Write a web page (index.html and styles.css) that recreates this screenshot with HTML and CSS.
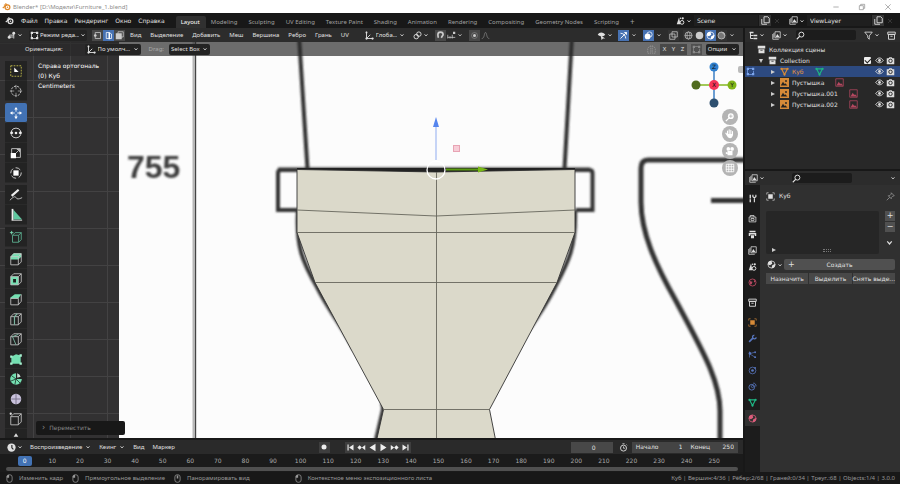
FILE: index.html
```html
<!DOCTYPE html>
<html lang="ru">
<head>
  <meta charset="UTF-8">
  <title>Blender</title>
  <link rel="stylesheet" href="styles.css">
</head>
<body>
  <!-- icon sprite, every symbol is 12x12 -->
  <svg class="sprite" aria-hidden="true">
    <symbol id="i-down" viewBox="0 0 12 12"><path d="M3 4.500 6 8l3-3.500" fill="none" stroke="currentColor" stroke-width="1.600"/></symbol>
    <symbol id="i-blender" viewBox="0 0 12 12"><path d="M1 8 6 4H2.500M6 4 4.800 1.800" fill="none" stroke="currentColor" stroke-width="1.500"/><circle cx="7.300" cy="7" r="3.200" fill="none" stroke="currentColor" stroke-width="1.700"/><circle cx="7.300" cy="7" r="1.100" fill="currentColor"/></symbol>
    <symbol id="i-view" viewBox="0 0 12 12"><path d="M1 8h7M3 8V5.500h6M9 2v8" fill="none" stroke="currentColor" stroke-width="1.200"/><circle cx="9" cy="3" r="1.900" fill="currentColor"/><circle cx="3" cy="8.500" r="1.900" fill="currentColor"/></symbol>
    <symbol id="i-edit" viewBox="0 0 12 12"><path d="M2 4v5M4 2h4M10 5v3M4 10h4" stroke="currentColor" fill="none"/><path d="M1 1h3v3H1zM8 1h3v3H8zM1 8h3v3H1zM8 8h3v3H8z" fill="currentColor"/></symbol>
    <symbol id="i-vert" viewBox="0 0 12 12"><path d="M3 2h7v8H3z" fill="none" stroke="currentColor"/><circle cx="3" cy="6" r="1.800" fill="currentColor"/></symbol>
    <symbol id="i-edge" viewBox="0 0 12 12"><path d="M3 2h4l3 2v6H3z" fill="none" stroke="currentColor"/><path d="M7 2v9" stroke="currentColor" stroke-width="2"/></symbol>
    <symbol id="i-face" viewBox="0 0 12 12"><path d="M4 1h7v7H4z" fill="none" stroke="currentColor"/><path d="M1 3h8v8H1z" fill="currentColor"/></symbol>
    <symbol id="i-axes" viewBox="0 0 12 12"><path d="M2 1v9h9M2 10l5-5" fill="none" stroke="currentColor" stroke-width="1.200"/><circle cx="2" cy="2" r="1.300" fill="currentColor"/><circle cx="10" cy="10" r="1.500" fill="currentColor"/><circle cx="2" cy="10" r="1.500" fill="currentColor"/></symbol>
    <symbol id="i-pivot" viewBox="0 0 12 12"><circle cx="4.300" cy="7.500" r="3" fill="none" stroke="currentColor" stroke-width="1.200"/><circle cx="7.800" cy="4.200" r="3" fill="none" stroke="currentColor" stroke-width="1.200"/><circle cx="6" cy="6" r="1" fill="currentColor"/></symbol>
    <symbol id="i-magnet" viewBox="0 0 12 12"><path d="M3 9 2.500 5a3.500 3.500 0 0 1 7 0L7 9" fill="none" stroke="currentColor" stroke-width="2.200"/></symbol>
    <symbol id="i-snap" viewBox="0 0 12 12"><path d="M1 5v5M4 7v3M7 5v5M1 8.500h10" fill="none" stroke="currentColor"/><path d="M8 1h3v3H8z" fill="currentColor"/></symbol>
    <symbol id="i-prop" viewBox="0 0 12 12"><circle cx="6" cy="6" r="4" fill="none" stroke="currentColor" opacity=".4"/><circle cx="6" cy="6" r="2" fill="currentColor"/></symbol>
    <symbol id="i-bell" viewBox="0 0 12 12"><path d="M1 10c4 0 3-8 5-8s1 8 5 8" fill="none" stroke="currentColor" stroke-width="1.200"/></symbol>
    <symbol id="i-eyecur" viewBox="0 0 12 12"><path d="M1 5c2-4 7-4 10 0-3 3-6 3-10 0z" fill="currentColor"/><path d="m5 6 1 6 2-2 3 0z" fill="currentColor"/></symbol>
    <symbol id="i-gizmo" viewBox="0 0 12 12"><path d="M2 3c4 0 7 3 7 7M2 10l8-8M7 2h3v3" fill="none" stroke="currentColor" stroke-width="1.200"/></symbol>
    <symbol id="i-overlay" viewBox="0 0 12 12"><circle cx="4.800" cy="7.200" r="3.800" fill="currentColor"/><circle cx="7.300" cy="4.700" r="3.500" fill="none" stroke="currentColor"/></symbol>
    <symbol id="i-xray" viewBox="0 0 12 12"><path d="M4 1h7v7H4zM1 4h7v7H1z" fill="none" stroke="currentColor"/></symbol>
    <symbol id="i-mirror" viewBox="0 0 12 12"><path d="M5 1v10H1V4zM7 1v10h4V4z" fill="none" stroke="currentColor" stroke-dasharray="2 1"/></symbol>
    <symbol id="i-wire" viewBox="0 0 12 12"><circle cx="6" cy="6" r="4.700" fill="none" stroke="currentColor"/><ellipse cx="6" cy="6" rx="2" ry="4.700" fill="none" stroke="currentColor" stroke-width=".8"/><path d="M1 6h10" stroke="currentColor" stroke-width=".8"/></symbol>
    <symbol id="i-solid" viewBox="0 0 12 12"><circle cx="6" cy="6" r="5" fill="currentColor"/></symbol>
    <symbol id="i-ball" viewBox="0 0 12 12"><circle cx="6" cy="6" r="4.700" fill="none" stroke="currentColor"/><path d="M6 1a5 5 0 0 0-5 5l3 1 3-2zM6 11l1-4 4-2a5 5 0 0 1-5 6z" fill="currentColor"/></symbol>
    <symbol id="i-render" viewBox="0 0 12 12"><circle cx="6" cy="6" r="4.700" fill="#777" stroke="currentColor"/><path d="M6 2a4 4 0 0 1 4 4" fill="none" stroke="currentColor"/></symbol>
    <symbol id="i-scene" viewBox="0 0 12 12"><path d="M4 2 1 11h5z" fill="currentColor"/><circle cx="8" cy="8.500" r="2.500" fill="none" stroke="currentColor" stroke-width="1.300"/><circle cx="9" cy="3" r="1.500" fill="currentColor"/><circle cx="6" cy="3" r="1" fill="currentColor"/></symbol>
    <symbol id="i-copy" viewBox="0 0 12 12"><path d="M4 1h5l2 2v6H4zM1 4v7h7" fill="none" stroke="currentColor" stroke-width="1.200"/></symbol>
    <symbol id="i-layers" viewBox="0 0 12 12"><path d="M1 4v7h8M2.500 2.500V9" fill="none" stroke="currentColor"/><path d="M4 1h7v8H4z" fill="none" stroke="currentColor"/><path d="m5 8 2-4 3 4z" fill="currentColor"/></symbol>
    <symbol id="i-x" viewBox="0 0 12 12"><path d="m2 2 8 8M10 2l-8 8" stroke="currentColor" fill="none"/></symbol>
    <symbol id="i-tree" viewBox="0 0 12 12"><path d="M1 2h4M2 2v8h4M2 6h4" fill="none" stroke="currentColor" stroke-width="1.300"/><path d="M6 5h5v2H6zM6 9h5v2H6zM1 1h5v2H1z" fill="currentColor"/></symbol>
    <symbol id="i-search" viewBox="0 0 12 12"><circle cx="7.200" cy="4.800" r="3.300" fill="none" stroke="currentColor" stroke-width="1.300"/><path d="M5 7 1 11" stroke="currentColor" stroke-width="1.500"/></symbol>
    <symbol id="i-filter" viewBox="0 0 12 12"><path d="M1 1.500h10L7 6.500V11L5 9V6.500z" fill="none" stroke="currentColor" stroke-width="1.100"/></symbol>
    <symbol id="i-box" viewBox="0 0 12 12"><path d="M1 1h10v3.500H1zM2 5.500h8V11H2z" fill="currentColor"/><path d="M4.500 7h3" stroke="#282828"/></symbol>
    <symbol id="i-boxo" viewBox="0 0 12 12"><path d="M1 1.500h10v3H1zM2 4.500h8V11H2zM4.500 7h3" fill="none" stroke="currentColor" stroke-width="1.200"/></symbol>
    <symbol id="i-mesh" viewBox="0 0 12 12"><path d="M2 2.500h8L6 10z" fill="none" stroke="currentColor" stroke-width="1.500"/><circle cx="2" cy="2.500" r="1.500" fill="currentColor"/><circle cx="10" cy="2.500" r="1.500" fill="currentColor"/><circle cx="6" cy="10" r="1.500" fill="currentColor"/></symbol>
    <symbol id="i-image" viewBox="0 0 12 12"><path d="M0 0h12v12H0z" fill="currentColor"/><path d="m1 10 3-5 2 3 1-1 3 3z" fill="#222"/><circle cx="8" cy="4" r="1.200" fill="#222"/></symbol>
    <symbol id="i-imageo" viewBox="0 0 12 12"><path d="M1 1h10v10H1z" fill="none" stroke="currentColor"/><path d="m2 10 3-5 2 3 1-1 3 3z" fill="currentColor"/></symbol>
    <symbol id="i-eye" viewBox="0 0 12 12"><path d="M1 6c3-4.500 7-4.500 10 0-3 4-7 4-10 0z" fill="none" stroke="currentColor" stroke-width="1.300"/><circle cx="6" cy="6" r="1.900" fill="currentColor"/></symbol>
    <symbol id="i-cam" viewBox="0 0 12 12"><path d="M1 3h2.500l1-1.500h3l1 1.500H11v8H1z" fill="currentColor"/><circle cx="6" cy="6.500" r="2.300" fill="none" stroke="#222" stroke-width="1.200"/></symbol>
    <symbol id="i-tool" viewBox="0 0 12 12"><path d="M3 1v5M3 7v4" stroke="currentColor" stroke-width="1.800"/><path d="M6.500 1v2.500L8.500 5l2-1.500V1M8.500 5v6" stroke="currentColor" stroke-width="1.500" fill="none"/></symbol>
    <symbol id="i-rend" viewBox="0 0 12 12"><path d="M1.500 4h9v6.500h-9zM3 4V2h5v2M4 6h4v2.500H4z" fill="none" stroke="currentColor"/></symbol>
    <symbol id="i-print" viewBox="0 0 12 12"><path d="M2 1h8v2H2zM1 4h10v4H9V6H3v2H1zM4 7h4v4H4z" fill="currentColor"/></symbol>
    <symbol id="i-world" viewBox="0 0 12 12"><circle cx="6" cy="6" r="4.700" fill="none" stroke="currentColor" stroke-width="1.200"/><path d="M2 4 6 5 5 8 3 9zM8 2l2 3-2 1z" fill="currentColor"/></symbol>
    <symbol id="i-object" viewBox="0 0 12 12"><path d="M3 3h6v6H3z" fill="currentColor"/><path d="M1 3.500V1h2.500M8.500 1H11v2.500M11 8.500V11H8.500M3.500 11H1V8.500" fill="none" stroke="currentColor" stroke-width=".8"/></symbol>
    <symbol id="i-wrench" viewBox="0 0 12 12"><path d="m1.500 10.500 5-5" stroke="currentColor" stroke-width="2.200"/><path d="M8.500 1.500a2.500 2.500 0 1 0 2.500 3" fill="none" stroke="currentColor" stroke-width="1.900"/></symbol>
    <symbol id="i-part" viewBox="0 0 12 12"><path d="M2 2v8M2 5l8 5M2 5l7-2" fill="none" stroke="currentColor" stroke-width=".9"/><circle cx="2.500" cy="4.500" r="1.700" fill="currentColor"/><circle cx="9.500" cy="3" r="1.200" fill="currentColor"/><circle cx="9.500" cy="9.500" r="1.300" fill="currentColor"/></symbol>
    <symbol id="i-phys" viewBox="0 0 12 12"><circle cx="6" cy="6" r="4.500" fill="none" stroke="currentColor"/><circle cx="6" cy="6" r="1.800" fill="currentColor"/><circle cx="9.500" cy="2.500" r="1.200" fill="currentColor"/></symbol>
    <symbol id="i-constr" viewBox="0 0 12 12"><circle cx="5" cy="7" r="3.800" fill="none" stroke="currentColor" stroke-width="1.200"/><circle cx="6" cy="6" r="1.500" fill="none" stroke="currentColor"/><path d="M7 1.500a3.500 3.500 0 0 1 3.500 4.500" fill="none" stroke="currentColor" stroke-width="1.200"/></symbol>
    <symbol id="i-pin" viewBox="0 0 12 12"><path d="m7 1 4 4-2 .5-2 2V9L3 5l2-.200 2-2zM5 7l-4 4" fill="none" stroke="currentColor"/></symbol>
    <symbol id="i-clock" viewBox="0 0 12 12"><circle cx="6" cy="6" r="5.500" fill="currentColor"/><path d="M6.500 2.500V6.500L8.500 8.500" stroke="#222" stroke-width="1.500" fill="none"/></symbol>
    <symbol id="i-watch" viewBox="0 0 12 12"><circle cx="6" cy="6.800" r="4" fill="none" stroke="currentColor" stroke-width="1.200"/><path d="M6 4.500V7h2M4.500 1h3M10 2l1 1" stroke="currentColor" fill="none"/></symbol>
    <symbol id="i-first" viewBox="0 0 12 12"><path d="M2 2h1.500v8H2zM10 2v8L4 6z" fill="currentColor"/></symbol>
    <symbol id="i-prevkey" viewBox="0 0 12 12"><path d="m3.500 3 3 3-3 3-3-3zM11 2.500v7L6.500 6z" fill="currentColor"/></symbol>
    <symbol id="i-back" viewBox="0 0 12 12"><path d="M10 1v10L2 6z" fill="currentColor"/></symbol>
    <symbol id="i-mouse" viewBox="0 0 12 12"><rect x="2.500" y="1" width="7" height="10" rx="3" fill="none" stroke="currentColor"/><path d="M2.500 5V3q0-2 3-2v4z" fill="currentColor"/></symbol>
    <symbol id="i-mouse-m" viewBox="0 0 12 12"><rect x="2.500" y="1" width="7" height="10" rx="3" fill="none" stroke="currentColor"/><path d="M5 2h2v4H5z" fill="currentColor"/></symbol>
    <symbol id="i-cube" viewBox="0 0 12 12"><path d="M1.500 4h6.500v7H1.500zM1.500 4 4 1.500h6.500L8 4M10.500 1.500v7L8 11" fill="none" stroke="#ccc" stroke-width=".7"/></symbol>
  </svg>

  <header class="titlebar">
    <svg class="icon logo"><use href="#i-blender"/></svg>
    <span class="title">Blender* [D:\Модели\Furniture_1.blend]</span>
    <div class="window-buttons">
      <button aria-label="Свернуть"><svg viewBox="0 0 12 12"><path d="M2 6h8"/></svg></button>
      <button aria-label="Развернуть"><svg viewBox="0 0 12 12"><path d="M2 4h6v6H2zM4 4V2h6v6H8"/></svg></button>
      <button aria-label="Закрыть"><svg viewBox="0 0 12 12"><path d="m2 2 8 8M10 2l-8 8"/></svg></button>
    </div>
  </header>

  <div class="topbar">
    <nav class="menu">
      <button aria-label="Blender"><svg class="icon"><use href="#i-blender"/></svg></button>
      <button>Файл</button><button>Правка</button><button>Рендеринг</button><button>Окно</button><button>Справка</button>
    </nav>
    <nav class="tabs">
      <button class="active">Layout</button><button>Modeling</button><button>Sculpting</button><button>UV Editing</button><button>Texture Paint</button><button>Shading</button><button>Animation</button><button>Rendering</button><button>Compositing</button><button>Geometry Nodes</button><button>Scripting</button><button class="plus">+</button>
    </nav>
    <div class="datablock">
      <button class="pick" aria-label="Выбрать сцену"><svg class="icon"><use href="#i-scene"/></svg><svg class="caret"><use href="#i-down"/></svg></button>
      <input type="text" value="Scene" aria-label="Сцена">
      <button class="new" aria-label="Новая сцена"><svg class="icon"><use href="#i-copy"/></svg></button>
      <button class="del" aria-label="Удалить сцену"><svg class="caret"><use href="#i-x"/></svg></button>
    </div>
    <div class="datablock">
      <button class="pick" aria-label="Выбрать слой"><svg class="icon"><use href="#i-layers"/></svg><svg class="caret"><use href="#i-down"/></svg></button>
      <input type="text" value="ViewLayer" aria-label="Слой">
      <button class="new" aria-label="Новый слой"><svg class="icon"><use href="#i-copy"/></svg></button>
      <button class="del" aria-label="Удалить слой"><svg class="caret"><use href="#i-x"/></svg></button>
    </div>
  </div>

  <main class="workspace">
    <div class="left">
      <section class="view3d">
        <div class="view-header">
          <button class="pick" aria-label="Редактор"><svg class="icon"><use href="#i-view"/></svg><svg class="caret"><use href="#i-down"/></svg></button>
          <label class="drop mode"><svg class="icon"><use href="#i-edit"/></svg><select aria-label="Режим"><option>Режим реда...</option></select><svg class="caret"><use href="#i-down"/></svg></label>
          <div class="toggles">
            <button aria-label="Вершины"><svg class="icon"><use href="#i-vert"/></svg></button>
            <button class="on" aria-label="Рёбра"><svg class="icon"><use href="#i-edge"/></svg></button>
            <button aria-label="Грани"><svg class="icon"><use href="#i-face"/></svg></button>
          </div>
          <nav class="menu">
            <button>Вид</button><button>Выделение</button><button>Добавить</button><button>Меш</button><button>Вершина</button><button>Ребро</button><button>Грань</button><button>UV</button>
          </nav>
          <label class="drop orient"><svg class="icon"><use href="#i-axes"/></svg><select aria-label="Ориентация"><option>Глоба...</option></select><svg class="caret"><use href="#i-down"/></svg></label>
          <button class="pick" aria-label="Центр"><svg class="icon"><use href="#i-pivot"/></svg><svg class="caret"><use href="#i-down"/></svg></button>
          <div class="toggles">
            <button aria-label="Привязка"><svg class="icon"><use href="#i-magnet"/></svg></button>
            <button class="pick" aria-label="Тип привязки"><svg class="icon"><use href="#i-snap"/></svg><svg class="caret"><use href="#i-down"/></svg></button>
          </div>
          <div class="toggles">
            <button aria-label="Пропорционально"><svg class="icon"><use href="#i-prop"/></svg></button>
            <button class="pick dim" aria-label="Спад"><svg class="icon"><use href="#i-bell"/></svg></button>
          </div>
          <div class="view-options">
            <button class="pick" aria-label="Видимость"><svg class="icon"><use href="#i-eyecur"/></svg><svg class="caret"><use href="#i-down"/></svg></button>
            <div class="toggles"><button class="on" aria-label="Гизмо"><svg class="icon"><use href="#i-gizmo"/></svg></button><button class="pick" aria-label="Настройки гизмо"><svg class="caret"><use href="#i-down"/></svg></button></div>
            <div class="toggles"><button class="on" aria-label="Наложения"><svg class="icon"><use href="#i-overlay"/></svg></button><button class="pick" aria-label="Настройки наложений"><svg class="caret"><use href="#i-down"/></svg></button></div>
            <div class="toggles shading">
              <button aria-label="Рентген"><svg class="icon"><use href="#i-xray"/></svg></button>
            </div>
            <div class="toggles shading">
              <button aria-label="Каркас"><svg class="icon"><use href="#i-wire"/></svg></button><button aria-label="Сплошной"><svg class="icon"><use href="#i-solid"/></svg></button><button class="on" aria-label="Материал"><svg class="icon"><use href="#i-ball"/></svg></button><button aria-label="Рендер"><svg class="icon"><use href="#i-render"/></svg></button><button class="pick" aria-label="Настройки затенения"><svg class="caret"><use href="#i-down"/></svg></button>
            </div>
          </div>
        </div>

        <div class="stage">
          <svg class="scene" viewBox="0 42 743 396" preserveAspectRatio="xMidYMid slice" role="img" aria-label="Модель">
            <defs>
              <filter id="soft" x="-10%" y="-10%" width="120%" height="120%"><feGaussianBlur stdDeviation="1"/></filter>
              <pattern id="grid" x="33" y="80" width="37" height="37" patternUnits="userSpaceOnUse"><path d="M.5 0v37M0 .5h37" stroke="#434243" fill="none"/></pattern>
            </defs>
            <rect x="-400" y="0" width="1600" height="500" fill="#323132"/>
            <rect x="-400" y="0" width="1600" height="500" fill="url(#grid)"/>
            <rect x="119" y="0" width="1200" height="500" fill="#fcfcfc"/>
            <!-- blueprint -->
            <path d="M194.500 42v396" stroke="#999" stroke-width="4" opacity=".7"/>
            <path d="M195.500 42v396" stroke="#444"/>
            <g filter="url(#soft)" fill="none" stroke="#303030" stroke-width="4">
              <path d="M299 36l8.500 133M572 36l-7.500 133"/>
              <path d="M300 170H281q-3 0-3 3V210h20M572 170h17q3.500 0 3.500 3V210h-17M278 169.500h312"/>
              <path d="M298 211c-2 35 4 50 19 76 12 24 27 42 37 62"/>
              <path d="M575 211c1 35-6 50-20 76-8 16-16 28-27 43"/>
              <path d="M382 403q2 5 0 11l-6 26"/>
              <path d="M760 160H648q-7 0-7 8v34c0 30 14 62 35 99 26 49 44 79 44 110v40M711 200.500h40" stroke-width="5"/>
              <text class="dimension" x="127" y="178">755</text>
            </g>
            <!-- mesh -->
            <path d="M297 169.500 436 172l139-2.500v63l-18 50-67.500 127 8 40h-123l9-40L315 282.500l-18-50z" fill="#dbd9ca" stroke="#333" stroke-width=".9"/>
            <path d="M297 210l139 6 139-6M297 232.500h278M315 282.500h242M383 409.500h107M436.500 171v270" stroke="#66665c" stroke-width=".9" fill="none"/>
            <path d="M297 169 436 172l139-3v-1H297z" fill="#222"/>
            <!-- transform gizmo -->
            <path d="M436 160v-33" stroke="#b5c7f5" stroke-width="1.500"/>
            <path d="M436 117l3 10h-6z" fill="#5585ee"/>
            <path d="M446 169.500h35" stroke="#5a9a10" stroke-width="1.800"/>
            <path d="M488 169.500l-10-3v6z" fill="#78b816"/>
            <rect x="453.500" y="145.500" width="6" height="6" fill="#f7cdd7" stroke="#e8a4b4"/>
            <circle cx="436" cy="170" r="9" fill="none" stroke="#fff" stroke-width="1.300"/>
          </svg>

          <div class="tool-header">
            <label for="orientation">Ориентация:</label>
            <span class="drop space"><svg class="icon"><use href="#i-axes"/></svg><select id="orientation"><option>По умолч...</option></select><svg class="caret"><use href="#i-down"/></svg></span>
            <label class="drag" for="drag">Drag:</label>
            <span class="drop"><select id="drag"><option>Select Box</option></select><svg class="caret"><use href="#i-down"/></svg></span>
            <div class="mirror">
              <svg class="icon"><use href="#i-mirror"/></svg>
              <div class="xyz"><button>X</button><button>Y</button><button>Z</button></div>
              <button class="merge" aria-label="Автослияние"><svg class="icon"><use href="#i-edit"/></svg></button>
              <button class="options">Опции <svg class="caret"><use href="#i-down"/></svg></button>
            </div>
          </div>

          <div class="toolbar">
            <div class="group">
              <button aria-label="Выделение"><svg viewBox="0 0 16 16"><rect x="2" y="2" width="12" height="12" fill="none" stroke="#c5bf4a" stroke-dasharray="2 1.300"/><path d="m6 4 5 5H6z" fill="#fff"/></svg></button>
              <button aria-label="Курсор"><svg viewBox="0 0 16 16"><circle cx="8" cy="8" r="5.500" fill="none" stroke="#ddd" stroke-dasharray="2.500 1.300"/><path d="M8 1v5M8 10v5M1 8h5M10 8h5" stroke="#bbb" stroke-width=".8"/></svg></button>
            </div>
            <div class="group">
              <button class="active" aria-label="Перемещение"><svg viewBox="0 0 16 16"><path d="M8 3v3.500M8 9.500V13M3 8h3.500M9.500 8H13" stroke="#fff"/><path d="m8 1 2 3H6zM8 15l2-3H6zM1 8l3-2v4zM15 8l-3-2v4z" fill="#fff"/></svg></button>
              <button aria-label="Вращение"><svg viewBox="0 0 16 16"><path d="M2.500 6a6 6 0 0 1 11 0M2.500 10a6 6 0 0 0 11 0" fill="none" stroke="#ddd"/><path d="m1 8 2-2.500L5 8 3 10zM11 8l2-2.500L15 8l-2 2z" fill="#eee"/><circle cx="8" cy="8" r="1.500" fill="#eee"/></svg></button>
              <button aria-label="Масштаб"><svg viewBox="0 0 16 16"><path d="M3 8V3h10v10H8M8 8l4-4M9 4h3v3" fill="none" stroke="#ccc"/><path d="M2 8h6v6H2z" fill="#fff"/></svg></button>
              <button aria-label="Трансформация"><svg viewBox="0 0 16 16"><circle cx="8" cy="8" r="6" fill="none" stroke="#ddd" stroke-dasharray="6 3"/><path d="M5 5h6v6H5z" fill="#fff"/></svg></button>
            </div>
            <div class="group">
              <button aria-label="Аннотация"><svg viewBox="0 0 16 16"><path d="m3 9 8-7" stroke="#eee" stroke-width="2.500"/><path d="M1 14c4-4 6-5 7-3s3 2 7 0" fill="none" stroke="#ccc"/></svg></button>
              <button aria-label="Измерение"><svg viewBox="0 0 16 16"><path d="M5 2v11h10z" fill="#5fc9a0"/><path d="M4 1v13" stroke="#eee" stroke-width="2"/><path d="M3 14h12" stroke="#ddd"/></svg></button>
            </div>
            <div class="group">
              <button aria-label="Добавить куб"><svg viewBox="0 0 16 16"><path d="M4 6h7v8H4zM4 6l3-3h7l-3 3M14 3v8l-3 3" fill="none" stroke="#5cae90"/><path d="M3 1v4M1 3h4" stroke="#7fe0b8"/></svg></button>
            </div>
            <div class="group">
              <button aria-label="Экструдировать"><svg viewBox="0 0 12 12"><path d="M1.500 4 4 1h6.500v3L8 6.500H1.500z" fill="#74dfb1"/><use href="#i-cube"/></svg></button>
              <button aria-label="Вставить грани"><svg viewBox="0 0 12 12"><path d="M1.500 4H8v7H1.500z" fill="#74dfb1"/><path d="M3.500 6H6v3H3.500z" fill="#202020"/><use href="#i-cube"/></svg></button>
              <button aria-label="Фаска"><svg viewBox="0 0 12 12"><path d="M1 5 5 2h5.500L8 5.500H1z" fill="#74dfb1"/><path d="M1.500 5.500H8V11H1.500zM10.500 2v6L8 11" fill="none" stroke="#ccc" stroke-width=".7"/></svg></button>
              <button aria-label="Разрез петлёй"><svg viewBox="0 0 12 12"><use href="#i-cube"/><path d="M4.700 11V4L7 1.500" fill="none" stroke="#7bb5a0"/></svg></button>
              <button aria-label="Нож"><svg viewBox="0 0 12 12"><use href="#i-cube"/><path d="m3 4 3 7M3 4l5-2" fill="none" stroke="#7bb5a0" stroke-width=".8"/></svg></button>
              <button aria-label="Полигон"><svg viewBox="0 0 12 12"><path d="m2 4 4-2 4 1v7H2z" fill="#74dfb1"/><path d="M1 9h2v2H1zM9 9h2v2H9zM9 2h2v2H9zM1 3h2v2H1z" fill="#a6f0d0"/></svg></button>
              <button aria-label="Вращать"><svg viewBox="0 0 12 12"><path d="M6 6V1a5 5 0 1 0 5 5z" fill="#74dfb1"/><path d="M7 5V1a5 5 0 0 1 3 3z" fill="#c8ddd4"/><path d="M6 6 2 3M6 6 1 8M6 6l-1 5M6 6l4 4" stroke="#29493c" stroke-width=".8"/></svg></button>
              <button aria-label="Сгладить"><svg viewBox="0 0 12 12"><circle cx="6" cy="6" r="4.500" fill="#c9c2dc"/><path d="M2 6h8M6 1.500v9" stroke="#77718a" stroke-width=".8"/></svg></button>
              <button aria-label="Скольжение"><svg viewBox="0 0 12 12"><use href="#i-cube"/><circle cx="1.500" cy="1.500" r="1" fill="#ddd"/></svg></button>
              <button aria-label="Сжать"><svg viewBox="0 0 12 12"><path d="m6 1 2 3H4zM1 7l3-1v3zM11 7 8 6v3zM4 7h4v4H4z" fill="#ddd"/></svg></button>
            </div>
          </div>

          <div class="info">
            <div>Справа ортогональ</div>
            <div>(0) Куб</div>
            <div>Centimeters</div>
          </div>

          <details class="redo"><summary>Переместить</summary></details>

          <div class="navigate">
            <svg class="axes" viewBox="0 0 48 48">
              <path d="M24 6v36" stroke="#3d7fc4" stroke-width="1.500"/><path d="M6 24h36" stroke="#84b820" stroke-width="1.500"/>
              <circle cx="24" cy="6" r="4.500" fill="#2f80cf"/><circle cx="24" cy="42" r="4.500" fill="#2e5070"/>
              <circle cx="6" cy="24" r="4.500" fill="#506b1e"/><circle cx="42" cy="24" r="4.500" fill="#80b518"/><circle cx="24" cy="24" r="5" fill="#f6365a"/>
              <text x="24" y="8">Z</text><text x="24" y="26">X</text><text x="42" y="26">Y</text>
            </svg>
            <button aria-label="Приблизить"><svg viewBox="0 0 12 12"><circle cx="7" cy="5" r="3.500" fill="#fff"/><path d="M5 7l-4 4" stroke="#fff" stroke-width="1.500"/><path d="M5 5h4M7 3v4" stroke="#b4b4b4"/></svg></button>
            <button aria-label="Сдвиг"><svg viewBox="0 0 12 12"><path d="M3 7V2.500M5 6V1M7 6V1.500M9 7V3M1 5l2 3" stroke="#fff" stroke-width="1.300" stroke-linecap="round"/><path d="M2.500 6h7q0 5-3.500 5T2.500 7z" fill="#fff"/></svg></button>
            <button aria-label="Камера"><svg viewBox="0 0 12 12"><circle cx="4" cy="3.500" r="2.200" fill="#fff"/><circle cx="8.500" cy="3.500" r="2.200" fill="#fff"/><path d="M3 6h6v5H3zM1 7l2 1v1l-2 1z" fill="#fff"/></svg></button>
            <button aria-label="Проекция"><svg viewBox="0 0 12 12"><path d="M1.500 1.500h9v9h-9zM4.500 1v10M7.500 1v10M1 4.500h10M1 7.500h10" fill="none" stroke="#fff"/></svg></button>
          </div>
          <div class="side-handle"></div>
        </div>
      </section>

      <section class="timeline">
        <div class="time-header">
          <button class="pick" aria-label="Редактор"><svg class="icon"><use href="#i-clock"/></svg><svg class="caret"><use href="#i-down"/></svg></button>
          <nav class="menu">
            <button>Воспроизведение <svg class="caret"><use href="#i-down"/></svg></button><button>Кеинг <svg class="caret"><use href="#i-down"/></svg></button><button>Вид</button><button>Маркер</button>
          </nav>
          <div class="transport">
            <button class="record" aria-label="Запись"><svg class="caret"><use href="#i-solid"/></svg></button>
            <div class="toggles">
              <button aria-label="В начало"><svg class="icon"><use href="#i-first"/></svg></button>
              <button aria-label="Предыдущий ключ"><svg class="icon"><use href="#i-prevkey"/></svg></button>
              <button aria-label="Назад"><svg class="icon"><use href="#i-back"/></svg></button>
              <button class="flip" aria-label="Воспроизвести"><svg class="icon"><use href="#i-back"/></svg></button>
              <button class="flip" aria-label="Следующий ключ"><svg class="icon"><use href="#i-prevkey"/></svg></button>
              <button class="flip" aria-label="В конец"><svg class="icon"><use href="#i-first"/></svg></button>
            </div>
          </div>
          <div class="frames">
            <input class="current" type="text" value="0" aria-label="Кадр">
            <svg class="icon"><use href="#i-watch"/></svg>
            <label>Начало <input type="text" value="1"></label>
            <label>Конец <input type="text" value="250"></label>
          </div>
        </div>
        <div class="ruler">
          <span class="now">0</span><span>10</span><span>20</span><span>30</span><span>40</span><span>50</span><span>60</span><span>70</span><span>80</span><span>90</span><span>100</span><span>110</span><span>120</span><span>130</span><span>140</span><span>150</span><span>160</span><span>170</span><span>180</span><span>190</span><span>200</span><span>210</span><span>220</span><span>230</span><span>240</span><span>250</span>
        </div>
        <div class="scrollbar"></div>
      </section>
    </div>

    <aside class="right">
      <section class="outliner">
        <div class="panel-header">
          <button class="pick" aria-label="Редактор"><svg class="icon"><use href="#i-tree"/></svg><svg class="caret"><use href="#i-down"/></svg></button>
          <button class="pick" aria-label="Режим показа"><svg class="icon"><use href="#i-layers"/></svg><svg class="caret"><use href="#i-down"/></svg></button>
          <label class="search"><svg class="icon"><use href="#i-search"/></svg><input type="text" aria-label="Поиск"></label>
          <button class="pick" aria-label="Фильтр"><svg class="icon"><use href="#i-filter"/></svg><svg class="caret"><use href="#i-down"/></svg></button>
          <button class="pick add" aria-label="Новая коллекция"><svg class="icon"><use href="#i-boxo"/></svg></button>
        </div>
        <ul class="tree">
          <li class="root"><svg class="icon"><use href="#i-box"/></svg><span>Коллекция сцены</span></li>
          <li class="collection"><i class="arrow open"></i><svg class="icon"><use href="#i-box"/></svg><span>Collection</span>
            <span class="flags"><input type="checkbox" checked aria-label="Включить"><svg class="icon"><use href="#i-eye"/></svg><svg class="icon"><use href="#i-cam"/></svg></span></li>
          <li class="child selected"><svg class="icon mark"><use href="#i-edit"/></svg><i class="arrow"></i><svg class="icon orange"><use href="#i-mesh"/></svg><span>Куб</span><svg class="icon data green"><use href="#i-mesh"/></svg>
            <span class="flags"><svg class="icon"><use href="#i-eye"/></svg><svg class="icon"><use href="#i-cam"/></svg></span></li>
          <li class="child"><i class="arrow"></i><svg class="icon orange"><use href="#i-image"/></svg><span>Пустышка</span><svg class="icon data red"><use href="#i-imageo"/></svg>
            <span class="flags"><svg class="icon"><use href="#i-eye"/></svg><svg class="icon"><use href="#i-cam"/></svg></span></li>
          <li class="child"><i class="arrow"></i><svg class="icon orange"><use href="#i-image"/></svg><span>Пустышка.001</span><svg class="icon data red"><use href="#i-imageo"/></svg>
            <span class="flags"><svg class="icon"><use href="#i-eye"/></svg><svg class="icon"><use href="#i-cam"/></svg></span></li>
          <li class="child"><i class="arrow"></i><svg class="icon orange"><use href="#i-image"/></svg><span>Пустышка.002</span><svg class="icon data red"><use href="#i-imageo"/></svg>
            <span class="flags"><svg class="icon"><use href="#i-eye"/></svg><svg class="icon"><use href="#i-cam"/></svg></span></li>
        </ul>
      </section>

      <section class="properties">
        <div class="panel-header">
          <button class="pick" aria-label="Редактор"><svg class="icon"><use href="#i-layers"/></svg><svg class="caret"><use href="#i-down"/></svg></button>
          <label class="search"><svg class="icon"><use href="#i-search"/></svg><input type="text" aria-label="Поиск свойств"></label>
          <button class="pick more" aria-label="Настройки"><svg class="caret"><use href="#i-down"/></svg></button>
        </div>
        <div class="prop-body">
          <nav class="prop-tabs">
            <button class="spaced" aria-label="Инструмент"><svg class="icon"><use href="#i-tool"/></svg></button>
            <button aria-label="Рендер"><svg class="icon"><use href="#i-rend"/></svg></button>
            <button aria-label="Вывод"><svg class="icon"><use href="#i-print"/></svg></button>
            <button aria-label="Слой"><svg class="icon"><use href="#i-layers"/></svg></button>
            <button aria-label="Сцена"><svg class="icon"><use href="#i-scene"/></svg></button>
            <button class="spaced red" aria-label="Мир"><svg class="icon"><use href="#i-world"/></svg></button>
            <button class="spaced" aria-label="Коллекция"><svg class="icon"><use href="#i-boxo"/></svg></button>
            <button class="orange" aria-label="Объект"><svg class="icon"><use href="#i-object"/></svg></button>
            <button class="blue" aria-label="Модификаторы"><svg class="icon"><use href="#i-wrench"/></svg></button>
            <button class="blue" aria-label="Частицы"><svg class="icon"><use href="#i-part"/></svg></button>
            <button class="blue" aria-label="Физика"><svg class="icon"><use href="#i-phys"/></svg></button>
            <button class="blue" aria-label="Ограничения"><svg class="icon"><use href="#i-constr"/></svg></button>
            <button class="green" aria-label="Данные"><svg class="icon"><use href="#i-mesh"/></svg></button>
            <button class="pink active" aria-label="Материал"><svg class="icon"><use href="#i-ball"/></svg></button>
          </nav>
          <div class="material">
            <div class="crumb"><svg class="icon"><use href="#i-object"/></svg><span>Куб</span><svg class="icon pin"><use href="#i-pin"/></svg></div>
            <div class="slots">
              <div class="slot-list"><i class="arrow"></i><i class="grip"></i></div>
              <div class="slot-buttons"><button>+</button><button>−</button><svg class="icon"><use href="#i-down"/></svg></div>
            </div>
            <div class="create">
              <button class="pick" aria-label="Выбрать материал"><svg class="icon"><use href="#i-ball"/></svg><svg class="caret"><use href="#i-down"/></svg></button>
              <button class="wide"><b>+</b><span>Создать</span></button>
            </div>
            <div class="assign"><button>Назначить</button><button>Выделить</button><button>Снять выде...</button></div>
          </div>
        </div>
      </section>
    </aside>
  </main>

  <footer class="status">
    <span><svg class="icon"><use href="#i-mouse"/></svg>Изменить кадр</span>
    <span><svg class="icon"><use href="#i-mouse"/></svg>Прямоугольное выделение</span>
    <span><svg class="icon"><use href="#i-mouse-m"/></svg>Панорамировать вид</span>
    <span class="context"><svg class="icon"><use href="#i-mouse"/></svg>Контекстное меню экспозиционного листа</span>
    <span class="stats">Куб | Вершин:4/36 | Рёбер:2/68 | Граней:0/34 | Треуг.:68 | Objects:1/4 | 3.0.0</span>
  </footer>
</body>
</html>
```

FILE: styles.css
```css
* {
  box-sizing: border-box;
}
body {
  margin: 0;
  min-height: 100vh;
  display: flex;
  flex-direction: column;
  background: #181818;
  color: #e0e0e0;
  font: 6px/10px "DejaVu Sans", sans-serif;
  white-space: nowrap;
}
button, input, select {
  margin: 0;
  padding: 0;
  border: 0;
  background: none;
  color: inherit;
  font: inherit;
  min-width: 0;
}
button {
  display: flex;
  align-items: center;
  justify-content: center;
}
select {
  appearance: none;
}
.sprite { position: absolute; width: 0; height: 0; }
.icon { width: 9px; height: 9px; flex: none; }
.caret { width: 6px; height: 6px; flex: none; }

/* window title */
.titlebar {
  display: flex;
  align-items: center;
  height: 13px;
  padding: 0 8px 0 2px;
  background: #fff;
  color: #8c8c8c;
  font-family: "Noto Sans", sans-serif;
}
.logo { color: #e08a2c; margin-right: 2px; }
.window-buttons { display: flex; gap: 18px; margin-left: auto; }
.window-buttons svg { width: 8px; height: 8px; fill: none; stroke: #888; }

/* top bar */
.topbar {
  display: flex;
  align-items: center;
  height: 15px;
  padding: 0 5px;
}
.tabs, .view-header, .tool-header, .time-header, .status { font-family: "Noto Sans", sans-serif; }
.menu { display: flex; gap: 8px; }
.menu button { gap: 3px; }
.topbar .menu { gap: 7px; }
.tabs {
  display: flex;
  align-self: flex-end;
  flex: none;
  margin-left: 11px;
  color: #a0a0a0;
}
.tabs button { height: 12px; padding: 0 6px 0 5px; }
.tabs .active { background: #303030; color: #fff; border-radius: 2px 2px 0 0; }
.tabs .plus { font-size: 8px; }
.datablock { display: flex; height: 11px; gap: 1px; }
.datablock:nth-child(3) { margin-left: auto; }
.datablock + .datablock { margin-left: 6px; }
.datablock input { width: 64px; padding-left: 3px; background: #1f1f1f; }
.pick { height: 11px; padding: 0 1px; gap: 1px; }
.datablock .new { width: 12px; background: #333; }
.datablock .del { width: 10px; color: #555; }

/* workspace */
.workspace {
  flex: 1;
  display: grid;
  grid-template-columns: 1fr 155px;
  gap: 2px;
}
.left, .right, .view3d {
  display: flex;
  flex-direction: column;
  min-width: 0;
}
.left, .right { gap: 2px; }
.view3d { flex: 1; }
.view-header {
  display: flex;
  align-items: center;
  height: 14px;
  padding: 0 6px;
  background: #2c2c2c;
  gap: 5px;
}
.drop {
  display: flex;
  align-items: center;
  height: 11px;
  padding: 0 2px;
  gap: 2px;
  background: #232323;
  border-radius: 2px;
}
.drop .caret { margin-left: auto; }
.mode { width: 58px; gap: 1px; padding: 0 1px; }
.orient { margin-left: 9px; width: 44px; }
.view-header .orient { background: none; }
.toggles { display: flex; }
.toggles button { width: 11px; height: 11px; background: #484848; color: #ccc; }
.toggles .on { background: #4772b3; color: #fff; }
.toggles .pick { width: auto; min-width: 10px; background: none; }
.toggles .dim { color: #777; }
.view-header .menu { gap: 9px; }
.view-options { display: flex; gap: 4px; margin-left: auto; }
.shading button { background: #333; }

.stage {
  position: relative;
  flex: 1;
  display: flex;
  flex-direction: column;
  overflow: hidden;
}
.scene { position: absolute; inset: 0; width: 100%; height: 100%; }
.dimension {
  font: bold 32px "Liberation Sans", sans-serif;
  fill: #3c3c3c;
  stroke: none;
}
.tool-header {
  position: relative;
  display: flex;
  align-items: center;
  height: 14px;
  padding: 0 4px 0 25px;
  background: rgba(40, 40, 40, .68);
}
.tool-header .space { margin-left: 22px; }
.tool-header .drag { margin: 0 5px 0 8px; color: #aaa; }
.mirror { display: flex; gap: 4px; margin-left: auto; align-items: center; }
.mirror > .icon { color: #999; }
.mirror button { height: 11px; }
.xyz { display: flex; }
.xyz button { width: 9px; background: #484848; }
.merge { width: 11px; background: #505050; color: #888; }
.options { width: 33px; gap: 4px; background: #222; border-radius: 2px; }

.toolbar { position: relative; display: flex; flex-direction: column; gap: 2px; width: 22px; margin: 5px 0 0 5px; height: 0; }
.group button {
  width: 22px;
  height: 20px;
  background: #232323;
  border-bottom: 1px solid #2a2a2a;
}
.group svg { width: 14px; height: 14px; }
.group .active { background: #4272b4; border-radius: 2px; }
.info { position: absolute; left: 38px; top: 19px; color: #fff; }
.redo {
  position: absolute;
  left: 36px;
  bottom: 3px;
  width: 89px;
  height: 14px;
  padding-left: 6px;
  background: #181818;
  border-radius: 2px;
  color: #888;
  line-height: 14px;
}
.redo summary { list-style: none; }
.redo summary::before { content: "›"; margin-right: 4px; font-size: 8px; }
.navigate {
  position: absolute;
  top: 19px;
  right: 5px;
  display: flex;
  flex-direction: column;
  align-items: flex-end;
  gap: 1px;
}
.axes { width: 48px; height: 48px; margin-bottom: -1px; }
.axes text { font-size: 6px; text-anchor: middle; fill: #111; }
.navigate button { width: 16px; height: 16px; border-radius: 50%; background: #b4b4b4; }
.navigate button svg { width: 10px; height: 10px; }
.side-handle { position: absolute; top: 24px; right: 0; width: 5px; height: 7px; background: #bbb; border-radius: 2px 0 0 2px; }

/* timeline */
.timeline { height: 32px; background: #1b1b1b; }
.time-header {
  display: grid;
  grid-template-columns: auto auto 1fr auto;
  align-items: center;
  height: 14px;
  padding: 0 5px 0 6px;
  background: #2a2a2a;
}
.time-header .menu { margin-left: 6px; }
.transport { display: flex; justify-content: center; gap: 15px; padding-right: 16px; }
.transport button { height: 11px; width: 11px; background: #3e3e3e; color: #eee; }
.flip svg { transform: scaleX(-1); }
.frames { display: flex; align-items: center; gap: 4px; font-family: "DejaVu Sans", sans-serif; }
.frames input { width: 22px; text-align: right; }
.frames .current { width: 42px; height: 11px; padding-right: 17px; background: #484848; margin-right: 2px; }
.frames label { height: 11px; padding: 0 4px; background: #444; }
.frames label:last-child { margin-left: -4px; }
.ruler {
  display: grid;
  grid-template-columns: repeat(26, 1fr);
  justify-items: center;
  align-items: center;
  height: 13px;
  padding: 0 15px 0 11px;
  color: #aaa;
}
.now { width: 14px; background: #4272b4; color: #fff; text-align: center; border-radius: 2px; }
.scrollbar { height: 4px; margin: 0 5px 0 6px; background: #505050; border-radius: 2px; }

/* outliner */
.outliner { height: 141px; background: #282828; }
.panel-header {
  display: flex;
  align-items: center;
  height: 14px;
  padding: 0 3px;
  background: #2c2c2c;
}
.panel-header .pick + .pick { margin-left: 5px; }
.search { display: flex; align-items: center; width: 60px; height: 10px; margin: 0 auto; background: #1c1c1c; border-radius: 2px; }
.properties .search { margin-left: 26px; }
.search input { width: 48px; }
.tree { margin: 2px 0; padding: 0; list-style: none; }
.tree li { display: flex; align-items: center; height: 11px; padding-right: 5px; gap: 3px; }
.tree .root { padding-left: 12px; }
.tree .collection { padding-left: 12px; }
.tree .child { position: relative; padding-left: 24px; }
.tree .selected { background: #2d4a80; }
.selected span { color: #e8963c; }
.mark { position: absolute; left: 1px; color: #7ca5ec; }
.arrow { width: 8px; flex: none; }
.arrow::before { content: ""; display: block; width: 0; margin-left: 2px; border: 2px solid transparent; border-left: 4px solid #ccc; border-right: 0; }
.open::before { transform: rotate(90deg); }
.data { margin-left: 8px; }
.flags { display: flex; align-items: center; gap: 2px; margin-left: auto; }
.tree .flags { color: #ddd; }
.flags input {
  appearance: none;
  width: 7px;
  height: 7px;
  margin-right: 2px;
  background: #eee;
  border-radius: 1px;
}
.flags input:checked::before { content: ""; display: block; width: 5px; height: 3px; margin: 1px; border: solid #222; border-width: 0 0 1px 1px; transform: rotate(-45deg); }
.orange { color: #d68a38; }
.green { color: #1fb583; }
.red { color: #b54860; }
.blue { color: #5877c0; }
.pink { color: #dd5d7c; }

/* properties */
.properties { flex: 1; display: flex; flex-direction: column; background: #303030; }
.prop-body { flex: 1; display: grid; grid-template-columns: 15px 1fr; }
.prop-tabs { padding-top: 5px; background: #1c1c1c; }
.prop-tabs button { width: 15px; height: 16px; }
.prop-tabs .spaced { margin-bottom: 4px; }
.prop-tabs .active { background: #303030; }
.material { padding: 4px 5px 0 6px; }
.crumb { display: flex; align-items: center; gap: 4px; height: 14px; }
.pin { margin-left: auto; color: #999; }
.slots { display: flex; gap: 6px; margin-top: 8px; }
.slot-list { flex: 1; display: flex; align-items: flex-end; height: 43px; padding: 2px 4px; background: #262626; border-radius: 2px; }
.grip { width: 8px; height: 3px; margin: 0 auto; border: 1px dotted #777; }
.slot-buttons { display: flex; flex-direction: column; gap: 1px; }
.slot-buttons button { width: 10px; height: 10px; background: #505050; font-size: 8px; }
.slot-buttons .icon { margin-top: 5px; }
.create { display: flex; margin-top: 5px; }
.wide { position: relative; flex: 1; height: 11px; background: #505050; border-radius: 2px; }
.wide b { position: absolute; left: 4px; font-weight: normal; font-size: 8px; }
.assign { display: grid; grid-template-columns: 1fr 1fr 1fr; gap: 1px; margin-top: 3px; }
.assign button { height: 11px; background: #484848; }

/* status bar */
.status {
  display: flex;
  align-items: center;
  height: 12px;
  padding: 0 5px;
  color: #999;
}
.status span { display: flex; align-items: center; gap: 5px; margin-right: 8px; }
.status .context { margin-left: 36px; }
.status .stats { margin: 0 0 0 auto; }
```
